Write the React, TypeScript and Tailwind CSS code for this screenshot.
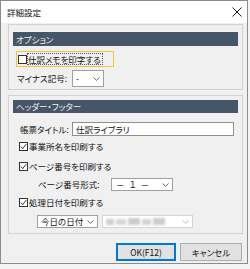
import React from 'react';

function Check({ checked }: { checked: boolean }) {
  return (
    <span className="w-[9px] h-[9px] border border-[#333333] bg-white flex items-center justify-center shrink-0">
      {checked && (
        <svg width="7" height="7" viewBox="0 0 7 7">
          <path d="M0.7 3.5 L2.7 5.6 L6.3 1.1" stroke="#1a1a1a" strokeWidth="0.9" fill="none" />
        </svg>
      )}
    </span>
  );
}

function Chevron({ color = '#555555' }: { color?: string }) {
  return (
    <svg width="7" height="4" viewBox="0 0 7 4" className="shrink-0">
      <path d="M0.5 0.5 L3.5 3.3 L6.5 0.5" stroke={color} strokeWidth="0.9" fill="none" />
    </svg>
  );
}

function Select({ value, className, valueClass = '' }: { value: string; className: string; valueClass?: string }) {
  return (
    <div className={`flex items-center justify-between bg-white border border-[#a0a0a0] pl-[3px] pr-[3px] ${className}`}>
      <span className={`leading-none ${valueClass}`}>{value}</span>
      <Chevron />
    </div>
  );
}

function SectionHeader({ title, className }: { title: string; className: string }) {
  return (
    <div className={`bg-[#465568] text-[#f2f2f2] flex items-center pl-[3px] ${className}`}>
      {title}
    </div>
  );
}

export default function App() {
  return (
    <div className="w-[250px] h-[269px] bg-[#f4f4f4] overflow-hidden text-[8.5px] text-[#111111] font-['Noto_Sans_CJK_JP','Noto_Sans',sans-serif] [font-feature-settings:'palt']">
      <div className="w-[248px] h-[264px] border border-[#8c8c8c] bg-[#f0f0f0] flex flex-col">
        {/* title bar */}
        <div className="h-[22px] bg-white flex items-center justify-between pl-[6px] pr-[5px] shrink-0">
          <span className="text-[8.5px]">詳細設定</span>
          <svg width="10" height="10" viewBox="0 0 10 10">
            <path d="M0.5 0.5 L9.5 9.5 M9.5 0.5 L0.5 9.5" stroke="#222222" strokeWidth="1" />
          </svg>
        </div>

        {/* オプション */}
        <div className="ml-[7px] mt-[1px] w-[235px] h-[66px] border border-[#d2d2d2] px-[4px] pt-[7px] shrink-0">
          <SectionHeader title="オプション" className="h-[14px]" />
          <div className="mt-[5px] ml-[3px] w-[98px] h-[16px] border border-[#f2c53d] flex items-center pl-[1px]">
            <Check checked={false} />
            <span className="ml-[1px] outline outline-1 outline-dotted outline-[#555555] leading-none py-[1px] pr-[1px]">
              仕訳メモを印字する
            </span>
          </div>
          <div className="mt-[3px] flex items-center">
            <span className="ml-[4px] w-[55px]">マイナス記号:</span>
            <Select value="-" className="w-[32px] h-[17px]" />
          </div>
        </div>

        {/* ヘッダー・フッター */}
        <div className="ml-[7px] mt-[5px] w-[235px] h-[139px] border border-[#d2d2d2] px-[4px] pt-[4px] shrink-0">
          <SectionHeader title="ヘッダー・フッター" className="h-[13px]" />
          <div className="mt-[9px] flex items-center">
            <span className="ml-[7px] w-[52px]">帳票タイトル:</span>
            <div className="w-[162px] h-[14px] bg-white border border-[#8f8f8f] flex items-center pl-[3px]">
              <span className="leading-none">仕訳ライブラリ</span>
            </div>
          </div>
          <div className="mt-[4px] h-[13px] flex items-center ml-[6px]">
            <Check checked={true} />
            <span className="ml-[1px]">事業所名を印刷する</span>
          </div>
          <div className="mt-[7px] h-[13px] flex items-center ml-[6px]">
            <Check checked={true} />
            <span className="ml-[1px]">ページ番号を印刷する</span>
          </div>
          <div className="mt-[5px] flex items-center">
            <span className="ml-[25px] w-[73px]">ページ番号形式:</span>
            <Select
              value="－ １ －"
              className="w-[62px] h-[13px]"
              valueClass="[font-feature-settings:normal] tracking-[1px] pl-[1px]"
            />
          </div>
          <div className="mt-[5px] h-[13px] flex items-center ml-[6px]">
            <Check checked={true} />
            <span className="ml-[1px]">処理日付を印刷する</span>
          </div>
          <div className="mt-[6px] flex items-center ml-[24px] gap-[4px]">
            <Select value="今日の日付" className="w-[61px] h-[13px]" />
            <div className="w-[91px] h-[13px] bg-white border border-[#d4d4d4] flex items-center justify-between pl-[3px] pr-[3px]">
              <div className="flex items-center gap-[2px] blur-[0.8px]">
                <span className="w-[8px] h-[6px] bg-[#cfcfcf]" />
                <span className="w-[10px] h-[6px] bg-[#d6d6d6]" />
                <span className="w-[12px] h-[7px] bg-[#cccccc]" />
                <span className="w-[9px] h-[6px] bg-[#d3d3d3]" />
                <span className="w-[12px] h-[7px] bg-[#cdcdcd]" />
              </div>
              <Chevron color="#b5b5b5" />
            </div>
          </div>
        </div>

        {/* buttons */}
        <div className="mt-[9px] flex justify-end gap-[4px] pr-[5px]">
          <button className="w-[60px] h-[18px] bg-[#e1e1e1] border border-[#0078d7] shadow-[inset_0_0_0_1px_#0078d7] text-[8.5px] font-['Noto_Sans_CJK_JP','Noto_Sans',sans-serif]">
            OK(F12)
          </button>
          <button className="w-[62px] h-[18px] bg-[#e1e1e1] border border-[#adadad] text-[8.5px] font-['Noto_Sans_CJK_JP','Noto_Sans',sans-serif]">
            キャンセル
          </button>
        </div>
      </div>
    </div>
  );
}
